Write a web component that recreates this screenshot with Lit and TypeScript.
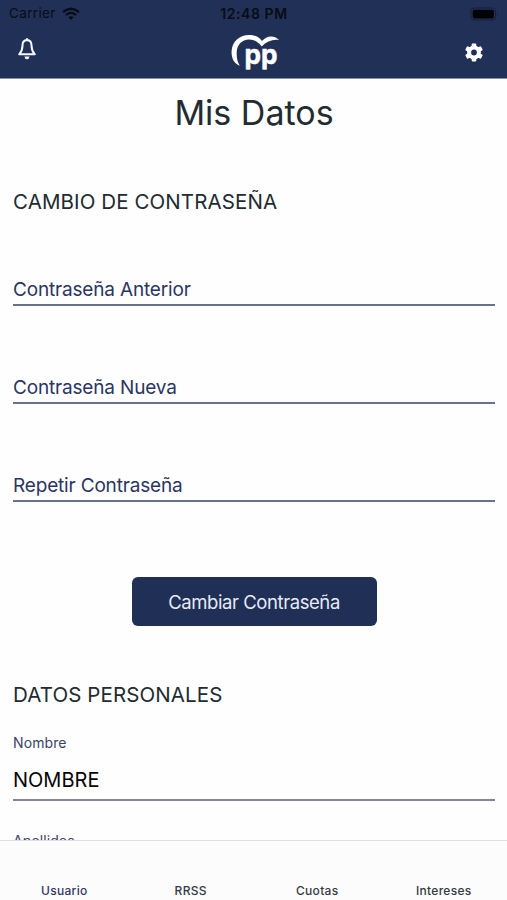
import { LitElement, html, css, svg } from "lit";
import { customElement } from "lit/decorators.js";

const gearTeeth = [0, 60, 120, 180, 240, 300];

@customElement("app-root")
export class AppRoot extends LitElement {
  static styles = css`
    :host {
      display: flex;
      flex-direction: column;
      height: 900px;
      overflow: hidden;
      background: #fefefe;
      color: #222b30;
      font-family: Inter, "Liberation Sans", sans-serif;
      white-space: nowrap;
    }
    svg { display: block; flex: none; }
    .top {
      flex: none;
      height: 79px;
      box-sizing: border-box;
      background: #213056;
      border-bottom: 1px solid #8591a8;
    }
    .status {
      display: grid;
      grid-template-columns: 1fr auto 1fr;
      align-items: center;
      height: 27px;
      padding: 0 8px 0 9px;
      color: #080c16;
      font-size: 13.5px;
      line-height: 27px;
    }
    .carrier { display: flex; align-items: center; gap: 6px; letter-spacing: 0.35px; }
    .clock { font-weight: 600; font-size: 14px; letter-spacing: 0.55px; }
    .battery { justify-self: end; }
    .bar {
      display: grid;
      grid-template-columns: 1fr auto 1fr;
      align-items: center;
      height: 51px;
      padding: 0 23px 0 17px;
    }
    .bell { margin-top: -7px; }
    .logo { margin-left: 9px; margin-top: -1px; }
    .gear { justify-self: end; }
    .logo-text { font: 700 27px Inter, sans-serif; fill: #fff; stroke: #fff; stroke-width: 0.5px; }
    .content { flex: 1; min-height: 0; overflow: hidden; padding: 0 12px 0 13px; }
    h1, h2 { margin: 0; font-weight: 400; }
    h1 { height: 66px; line-height: 67px; text-align: center; font-size: 34px; letter-spacing: 0; }
    h2 { font-size: 20.5px; line-height: 30px; letter-spacing: 0.1px; }
    .first { margin-top: 42px; }
    .field {
      height: 98px;
      box-sizing: border-box;
      display: flex;
      align-items: flex-end;
      color: #2b3562;
      font-size: 19px;
      letter-spacing: -0.17px;
      line-height: 29px;
      border-bottom: 2px solid #69718f;
    }
    .fields { height: 286px; display: flex; flex-direction: column; }
    .fields .field:first-child { height: 89px; }
    .button {
      display: flex;
      align-items: center;
      justify-content: center;
      width: 245px;
      height: 49px;
      margin: 74px auto 54px;
      border: 0;
      padding: 0;
      border-radius: 6px;
      background: #202f56;
      color: #e6ebf7;
      font: 400 18.5px Inter, sans-serif;
      letter-spacing: -0.42px;
    }
    .label { color: #3c4268; font-size: 14px; line-height: 20px; letter-spacing: 0.1px; }
    .h2gap { margin-top: 23px; }
    .value {
      height: 48px;
      box-sizing: border-box;
      color: #050505;
      font-size: 20px;
      line-height: 54px;
      border-bottom: 2px solid #8582a5;
    }
    .next { margin-top: 30px; }
    .tabs {
      flex: none;
      height: 60px;
      box-sizing: border-box;
      display: grid;
      grid-template-columns: repeat(4, 1fr);
      border-top: 1px solid #dddfe0;
      background: #fcfcfd;
      font-size: 12px;
      font-weight: 500;
      line-height: 16px;
      letter-spacing: 0.3px;
      text-align: center;
      padding: 42px 0 0 1px;
      color: #333b42;
    }
    .active { color: #303763; }
  `;

  render() {
    return html`
      <header class="top">
        <div class="status">
          <div class="carrier"><span>Carrier</span>
            <svg width="18" height="14" viewBox="0 0 18 14" fill="none" stroke="#080c16">
              <path d="M1 5.2Q9-1.6 17 5.2" stroke-width="2.3"/>
              <path d="M3.9 8Q9 3.8 14.1 8" stroke-width="2.2"/>
              <path d="M6.3 10.3Q9 8 11.7 10.3L9 13Z" fill="#080c16" stroke="none"/>
            </svg>
          </div>
          <span class="clock">12:48 PM</span>
          <svg class="battery" width="29" height="14" viewBox="0 0 29 14">
            <rect x="1" y="1" width="24.5" height="12" rx="3.2" fill="none" stroke="#151e38"/>
            <rect x="2.7" y="2.7" width="21.2" height="8.8" rx="1.7" fill="#020306"/>
            <path d="M27 5Q29 7 27 9Z" fill="#151e38"/>
          </svg>
        </div>
        <div class="bar">
          <svg class="bell" width="20" height="24" viewBox="0 0 20 24" fill="none" stroke="#f4f7ff" stroke-width="2" stroke-linejoin="round" stroke-linecap="round">
            <path d="M10 3C6.9 3.3 5.5 5.4 5.5 8.4C5.5 12.8 4.4 14.8 2.2 17.3H17.8C15.6 14.8 14.5 12.8 14.5 8.4C14.5 5.4 13.1 3.3 10 3Z"/>
            <path d="M10 2V3"/>
            <path d="M7.4 19.5H12.6Q12.1 22.2 10 22.2T7.4 19.5Z" fill="#f4f7ff" stroke="none"/>
          </svg>
          <svg class="logo" width="50" height="38" viewBox="231 33 50 38">
            <path fill="#fff" d="M240.8 65.8C234.5 63.2 232.3 57.5 232.6 51C233.2 41 241 35 250 35C256 35 260 37 263 41C267 36.3 274 34 280.3 40C273.5 39 267.5 41.5 262.7 46.4C259 42 255 39.3 250 39.4C243 39.7 238 44.5 237.7 52C237.5 58 238.4 62 240.8 65.8Z"/>
            <text class="logo-text" x="245.6" y="63.8" textLength="33" lengthAdjust="spacingAndGlyphs">pp</text>
          </svg>
          <svg class="gear" width="20" height="20" viewBox="-10 -9.5 20 20" fill="#fff">
            ${gearTeeth.map((a) => svg`<rect x="-2.3" y="-9" width="4.6" height="5" rx="1" transform="rotate(${a})"/>`)}
            <circle r="4.9" fill="none" stroke="#fff" stroke-width="4"/>
          </svg>
        </div>
      </header>
      <main class="content">
        <h1>Mis Datos</h1>
        <h2 class="first">CAMBIO DE CONTRASEÑA</h2>
        <div class="fields">
          <div class="field">Contraseña Anterior</div>
          <div class="field">Contraseña Nueva</div>
          <div class="field">Repetir Contraseña</div>
        </div>
        <button class="button">Cambiar Contraseña</button>
        <h2>DATOS PERSONALES</h2>
        <div class="label h2gap">Nombre</div>
        <div class="value">NOMBRE</div>
        <div class="label next">Apellidos</div>
      </main>
      <nav class="tabs">
        <span class="active">Usuario</span><span>RRSS</span><span>Cuotas</span><span>Intereses</span>
      </nav>
    `;
  }
}
